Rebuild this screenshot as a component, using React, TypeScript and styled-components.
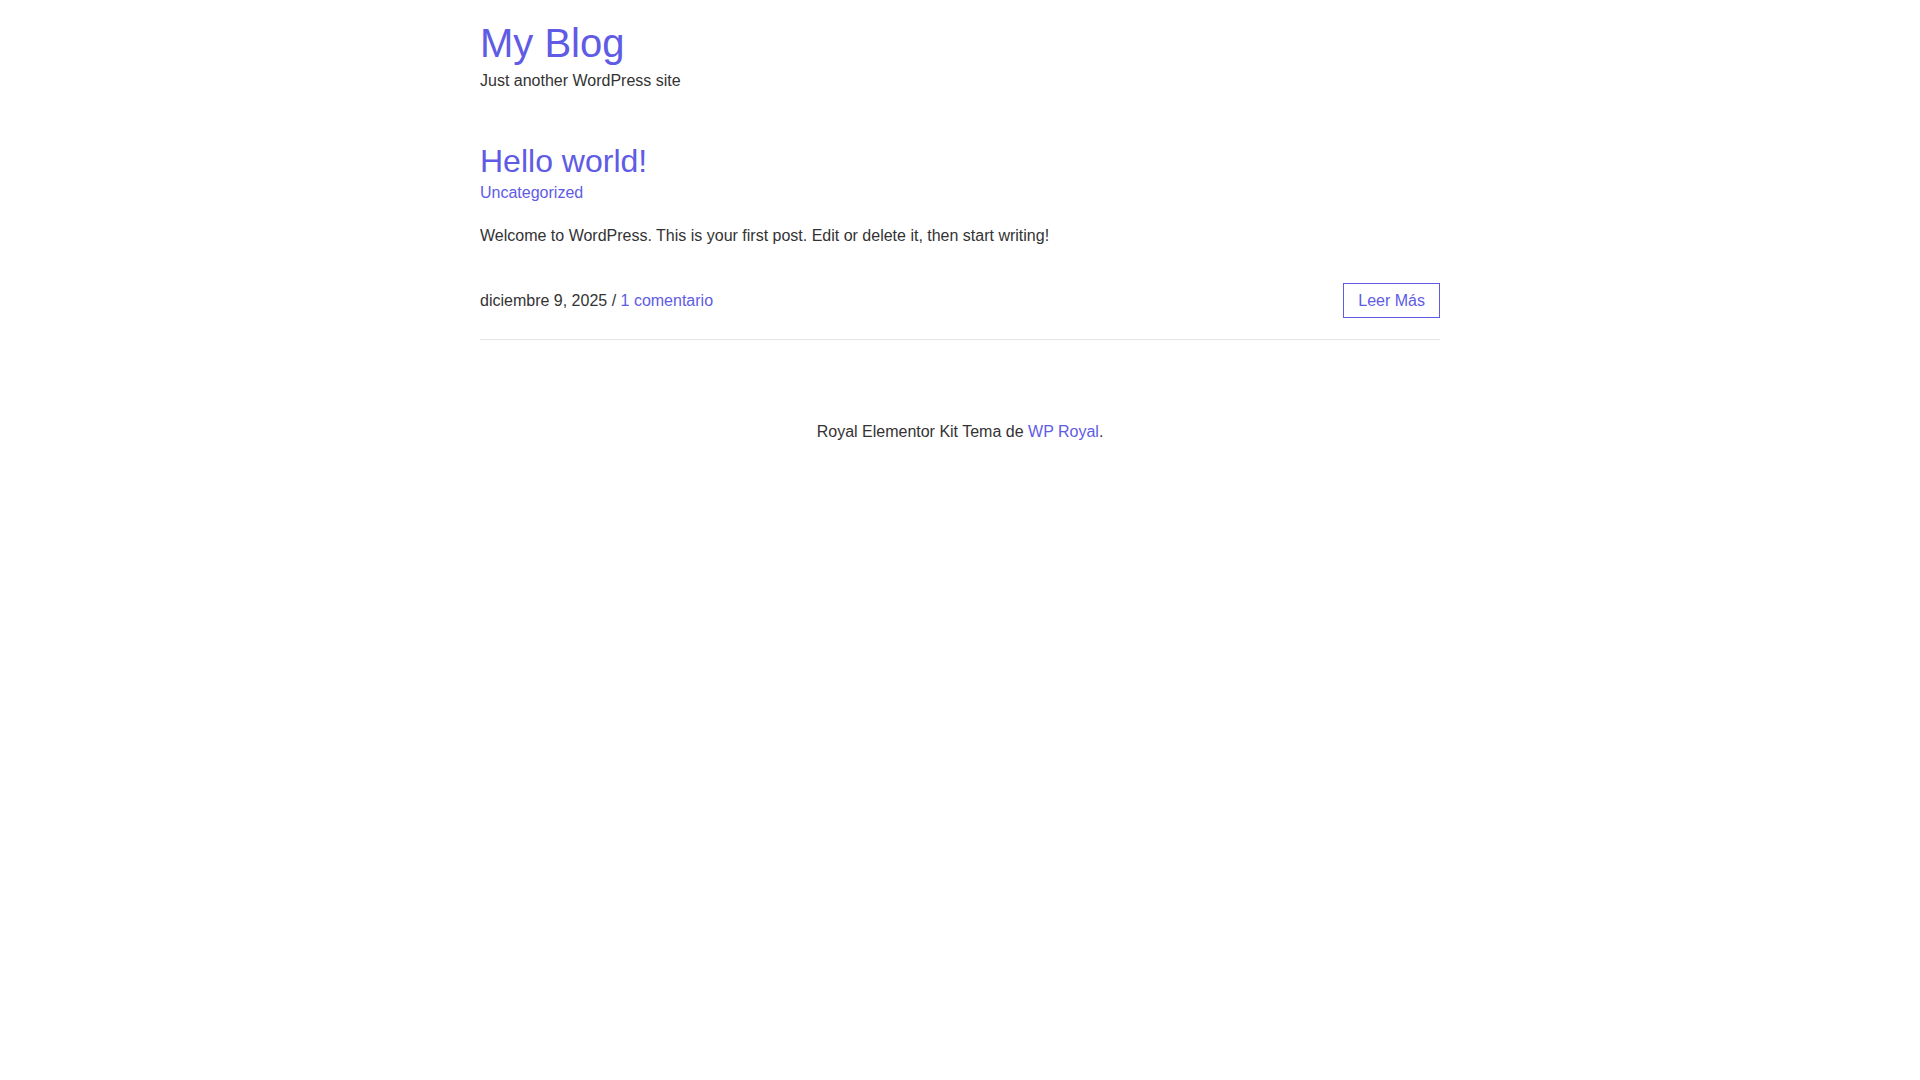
import styled, { createGlobalStyle } from "styled-components";

const GlobalStyle = createGlobalStyle`
  body {
    margin: 0;
    background: #ffffff;
    font-family: "Liberation Sans", Arial, sans-serif;
    font-size: 16px;
    line-height: 24px;
    color: #333333;
  }
  a {
    color: #605be5;
    text-decoration: none;
  }
`;

const App = () => {
  return (
    <Page>
      <GlobalStyle />
      <Header>
        <SiteTitle href="#">My Blog</SiteTitle>
        <Tagline>Just another WordPress site</Tagline>
      </Header>
      <Main>
        <Post>
          <PostTitle href="#">Hello world!</PostTitle>
          <Category href="#">Uncategorized</Category>
          <Excerpt>
            Welcome to WordPress. This is your first post. Edit or delete it,
            then start writing!
          </Excerpt>
          <Meta>
            <MetaText>
              diciembre 9, 2025 / <a href="#">1 comentario</a>
            </MetaText>
            <ReadMore href="#">Leer Más</ReadMore>
          </Meta>
        </Post>
      </Main>
      <Footer>
        Royal Elementor Kit Tema de <a href="#">WP Royal</a>.
      </Footer>
    </Page>
  );
};

export default App;

const Page = styled.div`
  width: 960px;
  margin: 0 auto;
`;

const Header = styled.header`
  padding-top: 19px;
  display: flex;
  flex-direction: column;
  align-items: flex-start;
`;

const SiteTitle = styled.a`
  font-size: 40px;
  line-height: 48px;
`;

const Tagline = styled.p`
  margin: 2px 0 0;
`;

const Main = styled.main`
  padding-top: 48px;
`;

const Post = styled.article`
  display: flex;
  flex-direction: column;
  align-items: flex-start;
  padding-bottom: 21px;
  border-bottom: 1px solid #e5e5e5;
`;

const PostTitle = styled.a`
  font-size: 32px;
  line-height: 40px;
`;

const Category = styled.a`
  font-size: 16px;
`;

const Excerpt = styled.p`
  margin: 19px 0 0;
`;

const Meta = styled.div`
  align-self: stretch;
  margin-top: 35px;
  display: flex;
  justify-content: space-between;
  align-items: center;
`;

const MetaText = styled.span``;

const ReadMore = styled.a`
  border: 1px solid #605be5;
  padding: 5px 14px;
  line-height: 23px;
`;

const Footer = styled.footer`
  text-align: center;
  padding-top: 80px;
`;
